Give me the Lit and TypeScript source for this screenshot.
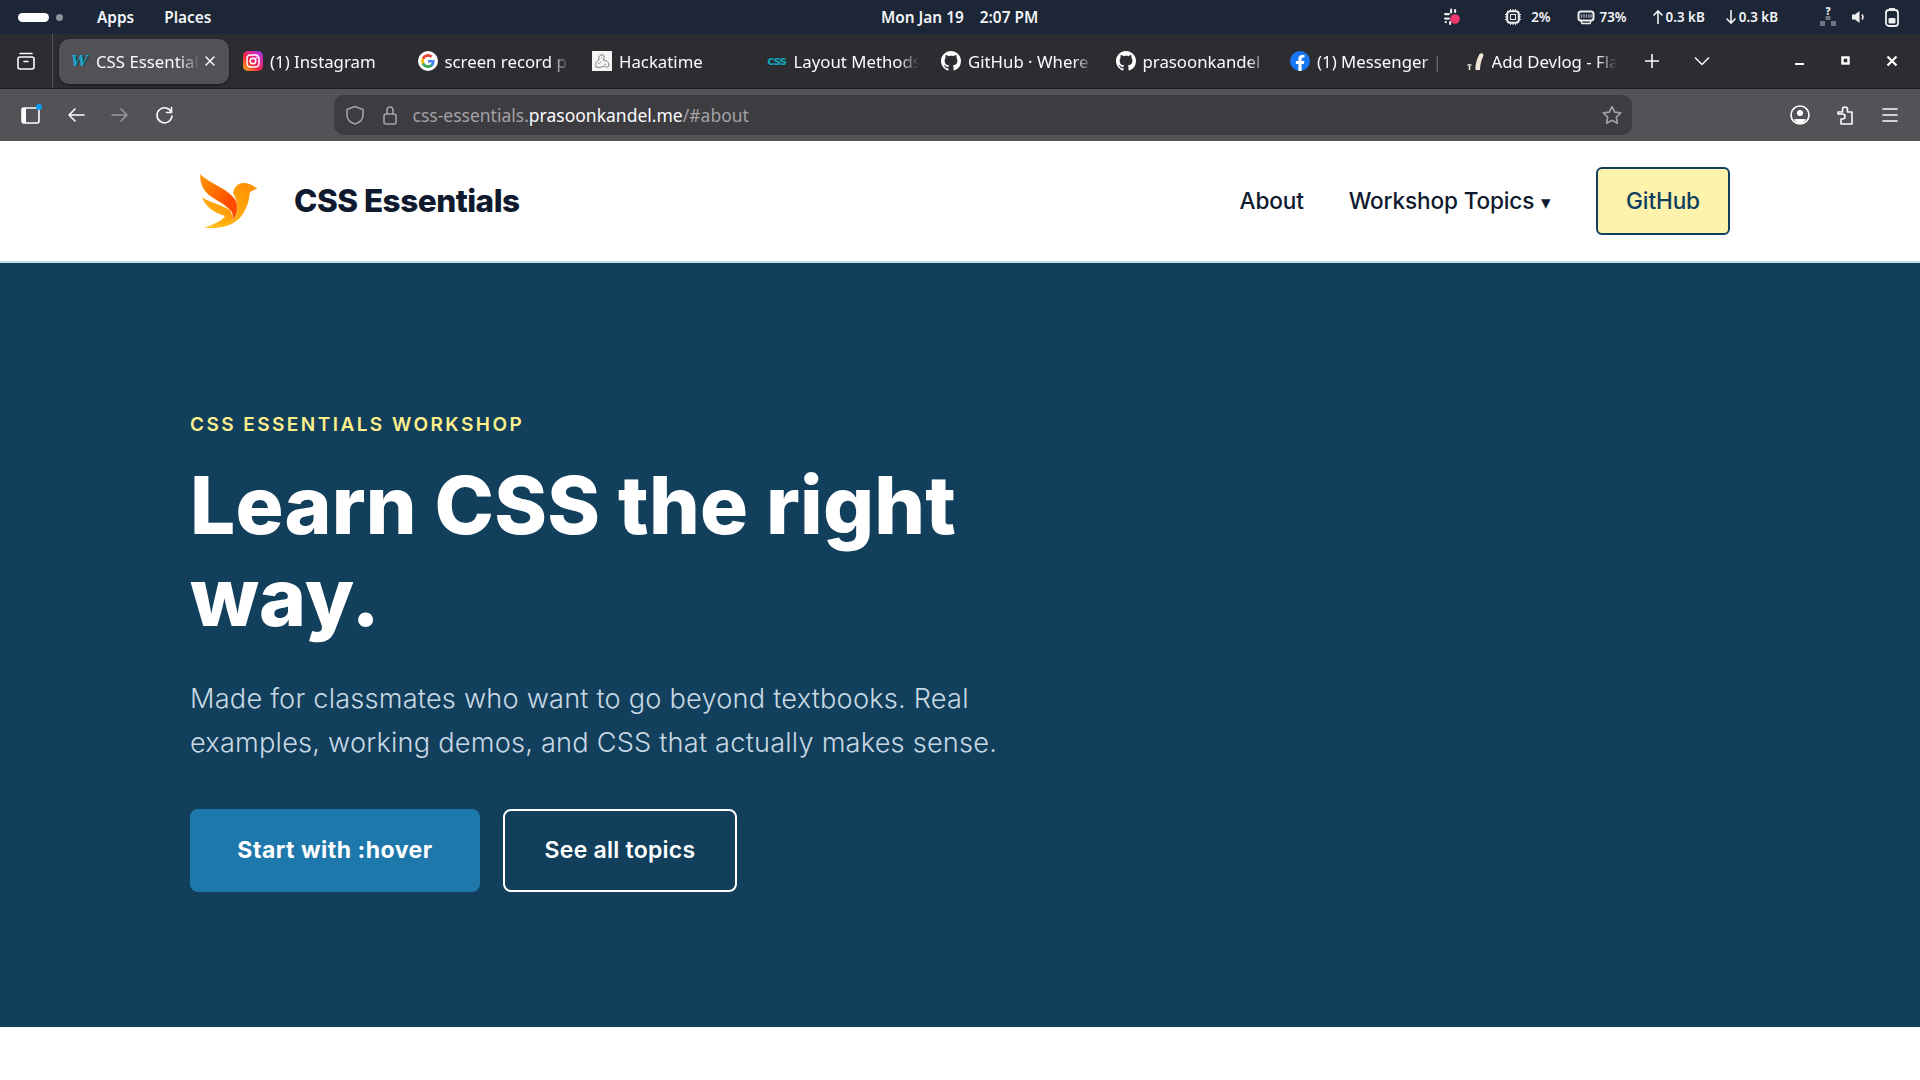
import { LitElement, html, css, svg } from 'lit'
import { customElement } from 'lit/decorators.js'

const stroke = (d: unknown, size = 22) => html`<svg width=${size} height=${size} viewBox="0 0 22 22" fill="none" stroke="currentColor" stroke-width="1.6" stroke-linecap="round" stroke-linejoin="round">${d}</svg>`

const githubMark = html`<svg width="20" height="20" viewBox="0 0 16 16" fill="#fff"><path d="M8 0C3.58 0 0 3.58 0 8c0 3.54 2.29 6.53 5.47 7.59.4.07.55-.17.55-.38 0-.19-.01-.82-.01-1.49-2.01.37-2.53-.49-2.69-.94-.09-.23-.48-.94-.82-1.13-.28-.15-.68-.52-.01-.53.63-.01 1.08.58 1.23.82.72 1.21 1.87.87 2.33.66.07-.52.28-.87.51-1.07-1.78-.2-3.64-.89-3.64-3.95 0-.87.31-1.59.82-2.15-.08-.2-.36-1.02.08-2.12 0 0 .67-.21 2.2.82.64-.18 1.32-.27 2-.27s1.36.09 2 .27c1.53-1.04 2.2-.82 2.2-.82.44 1.1.16 1.92.08 2.12.51.56.82 1.27.82 2.15 0 3.07-1.87 3.75-3.65 3.95.29.25.54.73.54 1.48 0 1.07-.01 1.93-.01 2.2 0 .21.15.46.55.38A8.01 8.01 0 0 0 16 8c0-4.42-3.58-8-8-8z"/></svg>`

const tabs = [
  { title: '(1) Instagram', icon: html`<svg width="20" height="20" viewBox="0 0 20 20"><defs><linearGradient id="ig" x1="0" y1="1" x2="1" y2="0"><stop offset="0" stop-color="#fdc10e"/><stop offset=".4" stop-color="#f0283c"/><stop offset=".75" stop-color="#d42bb0"/><stop offset="1" stop-color="#7a3bea"/></linearGradient></defs><rect width="20" height="20" rx="5" fill="url(#ig)"/><rect x="4" y="4" width="12" height="12" rx="3.4" fill="none" stroke="#fff" stroke-width="1.5"/><circle cx="10" cy="10" r="2.8" fill="none" stroke="#fff" stroke-width="1.5"/><circle cx="13.6" cy="6.4" r=".9" fill="#fff"/></svg>` },
  { title: 'screen record p', icon: html`<svg width="20" height="20" viewBox="0 0 20 20"><circle cx="10" cy="10" r="10" fill="#fff"/><path d="M16.6 10.2c0-.5 0-.9-.1-1.3H10v2.5h3.7a3.2 3.2 0 0 1-1.4 2.1v1.7h2.2c1.3-1.2 2.1-3 2.1-5z" fill="#4285f4"/><path d="M10 17c1.9 0 3.4-.6 4.5-1.7l-2.2-1.7c-.6.4-1.4.7-2.3.7a4 4 0 0 1-3.8-2.8H3.9v1.8A6.8 6.8 0 0 0 10 17z" fill="#34a853"/><path d="M6.2 11.5a4 4 0 0 1 0-2.9V6.8H3.9a6.8 6.8 0 0 0 0 6.500z" fill="#fbbc05"/><path d="M10 5.700c1 0 1.900.4 2.600 1l1.900-1.900A6.800 6.800 0 0 0 3.900 6.800l2.300 1.800A4 4 0 0 1 10 5.700z" fill="#ea4335"/></svg>` },
  { title: 'Hackatime', icon: html`<svg width="20" height="20" viewBox="0 0 20 20"><rect width="20" height="20" fill="#f4f4f4"/><path d="M4 16c-1-4 1-6 3-7-1-3 1-6 4-5 2 1 1 4 0 5 3 0 6 2 6 6-2 2-4 1-5 0-2 1-5 2-8 1z" fill="none" stroke="#777" stroke-width="1"/><path d="M9 7l1-.5M6 13l3-2M12 13l2 1" stroke="#999" stroke-width="1"/></svg>` },
  { title: 'Layout Methods', icon: html`<span class="cssfav">css</span>` },
  { title: 'GitHub · Where', icon: githubMark },
  { title: 'prasoonkandel', icon: githubMark },
  { title: '(1) Messenger |', icon: html`<svg width="20" height="20" viewBox="0 0 20 20"><circle cx="10" cy="10" r="10" fill="#1877f2"/><path d="M13.9 12.900l.44-2.900h-2.780V8.100c0-.8.390-1.560 1.630-1.560h1.260V4.080S13.300 3.880 12.200 3.880c-2.300 0-3.800 1.390-3.800 3.900V10H5.870v2.900H8.400v7a10 10 0 0 0 3.160 0v-7z" fill="#fff"/></svg>` },
  { title: 'Add Devlog - Flavor', icon: html`<svg width="20" height="20" viewBox="0 0 20 20"><path d="M10.500 19c-.5-5 1-10 4-16 2-1.500 4-.5 4 1.500-2 4-3.500 9-3.500 14.500z" fill="#efe6d8"/><path d="M2 14.500c.5-2 4.500-2 5 0z" fill="#efe6d8"/><rect x="3.700" y="14.500" width="1.600" height="4.500" fill="#efe6d8"/></svg>` },
]

@customElement('app-root')
export class AppRoot extends LitElement {
  static styles = css`
    :host { display: block; width: 1920px; height: 1080px; overflow: hidden; background: #fff; font-family: "Noto Sans", sans-serif; }
    svg { display: block; flex: none; }

    .sys { height: 34px; background: #1d2636; color: #f2f4f7; display: flex; align-items: center; font-size: 15.4px; font-weight: 600; padding-left: 18px; position: relative; }
    .pill { width: 31px; height: 9px; border-radius: 5px; background: #fff; }
    .dot { width: 7px; height: 7px; border-radius: 50%; background: #8d939c; margin-left: 7px; }
    .sys .menu { display: flex; gap: 30px; margin-left: 34px; }
    .clock { position: absolute; left: 881px; display: flex; gap: 16px; }
    .tray { margin-left: auto; display: flex; align-items: center; font-size: 13.4px; }
    .tray span { white-space: nowrap; }
    .tray .cpu { margin-left: 42px; }
    .tray .cpu-val { margin-left: 9px; }
    .tray .mem { margin-left: 26px; }
    .tray .mem-val { margin-left: 5px; }
    .tray .up { margin-left: 25px; }
    .tray .rate { margin-left: 2px; }
    .tray .down { margin-left: 20px; }
    .tray .vol { margin-left: 13px; }
    .tray .bat { margin: 0 20px 0 16px; }
    .tray .net { margin-left: 41px; width: 18px; height: 20px; display: flex; flex-direction: column; align-items: center; }
    .tray .net b { font-size: 10px; line-height: 9px; height: 9px; color: #e6e6e6; }

    .tabbar { height: 55px; background: #2d2c31; border-bottom: 1px solid #1c1b1f; box-sizing: border-box; display: flex; align-items: center; color: #fbfbfe; }
    .views { width: 53px; flex: none; height: 100%; box-sizing: border-box; border-right: 1px solid #55545a; display: flex; align-items: center; justify-content: center; }
    .tab { width: 174.5px; flex: none; height: 45px; box-sizing: border-box; padding: 0 12px 0 10px; display: flex; align-items: center; gap: 7px; font-size: 16.8px; white-space: nowrap; overflow: hidden; }
    .tab .label { flex: 1; overflow: hidden; padding-top: 1px; -webkit-mask-image: linear-gradient(90deg, #000 84%, transparent); mask-image: linear-gradient(90deg, #000 84%, transparent); }
    .tab.active { width: 170px; margin: 0 4px 0 6px; background: #525157; border-radius: 10px; box-shadow: 0 1px 3px rgba(0, 0, 0, .45); padding-right: 12px; }
    .tab.active .label { -webkit-mask-image: linear-gradient(90deg, #000 80%, transparent); mask-image: linear-gradient(90deg, #000 80%, transparent); }
    .tab.active svg { margin-left: -4px; }
    .cssfav { width: 20px; font: 700 12px "DejaVu Sans", sans-serif; color: #18a0b4; letter-spacing: -1px; text-align: center; text-shadow: 0 0 1px #0b3a44; }
    .wfav { width: 20px; font: italic 700 15px "DejaVu Serif", serif; color: #1ba1c4; text-align: center; letter-spacing: -1px; text-shadow: 1px 0 0 #10303c; }
    .tabend { margin-left: auto; display: flex; align-items: center; padding-right: 22px; }
    .tabend .more { margin-left: 32px; }
    .tabend .min { margin-left: 83px; }
    .tabend .max, .tabend .close { margin-left: 34px; }

    .toolbar { height: 52px; background: #535257; display: flex; align-items: center; color: #fbfbfe; }
    .tools { display: flex; align-items: center; width: 334px; padding-left: 20px; box-sizing: border-box; gap: 22.5px; }
    .off { opacity: .4; }
    .urlbar { width: 1298px; height: 40px; background: #3d3c40; border-radius: 10px; display: flex; align-items: center; padding: 0 9px 0 10px; box-sizing: border-box; gap: 13px; font-size: 17.5px; color: #a3a2a6; }
    .urlbar b { font-weight: 400; color: #fbfbfe; }
    .urlbar .addr { flex: 1; margin-left: -1.5px; }
    .right { margin-left: auto; display: flex; gap: 23px; padding-right: 19px; }

    nav { height: 120px; box-sizing: border-box; padding: 0 190px; display: flex; align-items: center; background: #fff; }
    .brand { display: flex; align-items: center; gap: 37px; font: 800 31.5px Inter, sans-serif; letter-spacing: -.5px; color: #0f1a2e; }
    .brand span { padding-bottom: 2px; }
    .bird { margin-left: 10px; }
    .links { margin-left: auto; display: flex; align-items: center; gap: 45px; font: 500 22.6px Inter, sans-serif; letter-spacing: -.15px; color: #0f1a2e; }
    .links > span { padding-bottom: 2px; }
    .caret { font-size: 19px; margin-left: 1px; }
    .links > .gh { width: 134px; height: 68px; box-sizing: border-box; background: #fef3ac; border: 2px solid #123f5e; border-radius: 6px; display: flex; align-items: center; justify-content: center; color: #123f5e; }

    .rule { height: 2px; background: #c3dcec; }
    .hero { height: 764px; box-sizing: border-box; background: #113f5c; padding: 150px 190px 0; color: #fff; }
    .eyebrow { font: 600 19px Inter, sans-serif; letter-spacing: 2.45px; color: #fef08a; line-height: 24px; }
    h1 { margin: 22px 0 0; width: 860px; font: 800 80px/92px Inter, sans-serif; letter-spacing: .2px; }
    p { margin: 33.5px 0 0; width: 840px; font: 300 27.2px/44px Inter, sans-serif; letter-spacing: .2px; color: #c8d8e3; }
    .cta { display: flex; gap: 23px; margin-top: 44px; }
    .btn { height: 83px; box-sizing: border-box; border-radius: 8px; display: flex; align-items: center; justify-content: center; font: 700 23px Inter, sans-serif; color: #fff; }
    .primary { width: 290px; background: #1f78ab; letter-spacing: .5px; }
    .ghost { width: 234px; border: 2px solid #fff; font-weight: 600; letter-spacing: .25px; }
  `

  render () {
    return html`
      <div class="sys">
        <div class="pill"></div><div class="dot"></div>
        <div class="menu"><span>Apps</span><span>Places</span></div>
        <div class="clock"><span>Mon Jan 19</span><span>2:07 PM</span></div>
        <div class="tray">
          <svg width="20" height="20" viewBox="0 0 20 20"><g fill="#e6e6e6"><rect x="2" y="6" width="6" height="2.200" rx="1.100"/><rect x="8" y="1.500" width="2.200" height="5" rx="1.100"/><rect x="12" y="2" width="2.200" height="4" rx="1.100"/><rect x="2" y="10.500" width="6" height="2.200" rx="1.100"/><rect x="7" y="14" width="2.200" height="4" rx="1.100"/><rect x="2.500" y="14" width="2.500" height="2.200" rx="1.100"/></g><circle cx="13" cy="12" r="4.800" fill="#f0386b"/></svg>
          <svg class="cpu" width="18" height="18" viewBox="0 0 18 18" fill="none" stroke="#eee"><rect x="3.200" y="3.200" width="11.600" height="11.600" rx="3" stroke-width="2"/><rect x="6.500" y="6.500" width="5" height="5" stroke-width="1"/><path d="M1 6.500h2M1 9h2M1 11.500h2M15 6.500h2M15 9h2M15 11.500h2M6.500 1v2M9 1v2M11.500 1v2M6.500 15v2M9 15v2M11.500 15v2" stroke-width="1"/></svg>
          <span class="cpu-val">2%</span>
          <svg class="mem" width="18" height="18" viewBox="0 0 18 18" fill="none"><rect x="1.500" y="3.500" width="15" height="9" rx="2.500" stroke="#eee" stroke-width="2"/><path d="M4.500 6.200v3.600M7 6.200v3.600M9.500 6.200v3.600M12 6.200v3.600M14 6.200v3.600" stroke="#9a9ea6" stroke-width="1.400"/><path d="M4 13l1 2.500h8l1-2.500" stroke="#eee" stroke-width="1.500"/></svg>
          <span class="mem-val">73%</span>
          <svg class="up" width="12" height="18" viewBox="0 0 12 18" fill="none" stroke="#eee" stroke-width="1.600"><path d="M6 16V3M1.500 7.500 6 3l4.500 4.500"/></svg>
          <span class="rate">0.3 kB</span>
          <svg class="down" width="12" height="18" viewBox="0 0 12 18" fill="none" stroke="#eee" stroke-width="1.600"><path d="M6 2v13M1.500 10.500 6 15l4.500-4.500"/></svg>
          <span class="rate">0.3 kB</span>
          <div class="net">
            <b>?</b>
            <svg width="18" height="11" viewBox="0 0 18 11" fill="#6d7480"><rect x="6.500" y="0" width="5" height="4"/><rect x="1" y="5" width="5" height="5"/><rect x="12" y="5" width="5" height="5"/></svg>
          </div>
          <svg class="vol" width="18" height="18" viewBox="0 0 18 18"><path d="M2 6.500h3L9.500 3v12L5 11.500H2z" fill="#eee"/><path d="M12 6.500a4 4 0 0 1 0 5" fill="none" stroke="#eee" stroke-width="1.500"/></svg>
          <svg class="bat" width="16" height="20" viewBox="0 0 16 20"><rect x="2" y="3" width="12" height="16" rx="3" fill="none" stroke="#eee" stroke-width="1.800"/><rect x="5" y="1" width="6" height="2" fill="#eee"/><rect x="4.500" y="11" width="7" height="5.500" rx="1" fill="#eee"/></svg>
        </div>
      </div>

      <div class="tabbar">
        <div class="views">${stroke(svg`<rect x="3" y="7" width="16" height="12" rx="2"/><path d="M5 3.500h12M9 11.500h4"/>`)}</div>
        <div class="tab active">
          <span class="wfav">W</span>
          <span class="label">CSS Essentials</span>
          <svg width="14" height="14" viewBox="0 0 14 14" stroke="#fbfbfe" stroke-width="1.500" stroke-linecap="round"><path d="M3 3l8 8M11 3l-8 8"/></svg>
        </div>
        ${tabs.map(t => html`<div class="tab">${t.icon}<span class="label">${t.title}</span></div>`)}
        <div class="tabend">
          <svg width="18" height="18" viewBox="0 0 18 18" stroke="#fbfbfe" stroke-width="1.600"><path d="M9 2v14M2 9h14"/></svg>
          <svg class="more" width="18" height="18" viewBox="0 0 18 18" fill="none" stroke="#fbfbfe" stroke-width="1.500"><path d="M2 5.500l7 7 7-7"/></svg>
          <svg class="min" width="12" height="12" viewBox="0 0 12 12"><rect x="1" y="8" width="9" height="2" fill="#fff"/></svg>
          <svg class="max" width="12" height="12" viewBox="0 0 12 12" fill="none" stroke="#fff" stroke-width="2.400"><rect x="2.500" y="2.500" width="6" height="6"/></svg>
          <svg class="close" width="12" height="12" viewBox="0 0 12 12" stroke="#fff" stroke-width="2.200"><path d="M1.500 1.500l9 9M10.500 1.500l-9 9"/></svg>
        </div>
      </div>

      <div class="toolbar">
        <div class="tools">
          <svg width="22" height="22" viewBox="0 0 22 22" fill="none" stroke="#fff"><rect x="2" y="4" width="17" height="15" rx="2" stroke-width="1.600"/><rect x="2" y="4" width="4" height="15" fill="#fff" stroke="none"/><circle cx="19" cy="3" r="3" fill="#0a9ff5" stroke="none"/></svg>
          ${stroke(svg`<path d="M19 11H4M10 5l-6 6 6 6"/>`)}
          <span class="off">${stroke(svg`<path d="M3 11h15M12 5l6 6-6 6"/>`)}</span>
          ${stroke(svg`<path d="M17.500 3.500V8.500h-5M17.500 8.500a7.500 7.500 0 1 0 .5 3.500"/>`)}
        </div>
        <div class="urlbar">
          ${stroke(svg`<path d="M11 2.500l8 3v6c0 4-3.500 7-8 8.500-4.500-1.500-8-4.500-8-8.500v-6z"/>`)}
          ${stroke(svg`<rect x="5" y="10" width="12" height="10" rx="2"/><path d="M8 10V6a3 3 0 0 1 6 0v4"/>`)}
          <span class="addr">css-essentials.<b>prasoonkandel.me</b>/#about</span>
          ${stroke(svg`<path d="M11 2.500l2.700 5.600 6 .8-4.400 4.200 1.100 6.100-5.400-3-5.400 3 1.100-6.100-4.400-4.200 6-.8z"/>`)}
        </div>
        <div class="right">
          <svg width="22" height="22" viewBox="0 0 22 22" fill="none" stroke="#fff" stroke-width="1.600"><circle cx="11" cy="11" r="9"/><circle cx="11" cy="9" r="3" fill="#fff" stroke="none"/><path d="M5.500 15h11v1.500l-3 2.500h-5l-3-2.500z" fill="#fff" stroke="none"/></svg>
          ${stroke(svg`<path d="M4 8h4.500V5.500a2.500 2.500 0 0 1 5 0V8H18v12H7v-5h1.500a2.500 2.500 0 0 0 0-5H4z"/>`)}
          ${stroke(svg`<path d="M4 5h14M4 11h14M4 17h14"/>`)}
        </div>
      </div>

      <nav>
        <div class="brand">
          <svg class="bird" width="57" height="54" viewBox="0 0 57 54">
            <defs>
              <linearGradient id="w1" x1="0" y1="0" x2="1" y2="1"><stop offset="0" stop-color="#ff9a00"/><stop offset=".7" stop-color="#ff4a00"/></linearGradient>
              <linearGradient id="w2" x1="0" y1="1" x2="1" y2="0"><stop offset="0" stop-color="#ffc61a"/><stop offset="1" stop-color="#ff8a00"/></linearGradient>
            </defs>
            <path d="M4 54C20 55 37 52 44 38 49 29 49 24 50 18L57.300 14.500C53 12 50 9 44 9 37 9 34 14 33 19 38 27 38 36 33 44 26 51 14 52 4 54Z" fill="url(#w2)"/>
            <path d="M2 23C8 28 18 29 30 36L34 46C26 51 14 52 4 54 14 50 22 47 25 42 15 39 5 33 2 23Z" fill="url(#w2)"/>
            <path d="M0 0C0 6 1 10 3 14 8 24 22 27 31 37 33 40 33 44 32 47 37 42 39 33 36 27 30 15 10 10 0 0Z" fill="url(#w1)" stroke="#ffe2b8" stroke-width=".4"/>
          </svg>
          <span>CSS Essentials</span>
        </div>
        <div class="links">
          <span>About</span>
          <span>Workshop Topics <span class="caret">▾</span></span>
          <span class="gh">GitHub</span>
        </div>
      </nav>
      <div class="rule"></div>

      <section class="hero">
        <div class="eyebrow">CSS ESSENTIALS WORKSHOP</div>
        <h1>Learn CSS the right way.</h1>
        <p>Made for classmates who want to go beyond textbooks. Real examples, working demos, and CSS that actually makes sense.</p>
        <div class="cta">
          <span class="btn primary">Start with :hover</span>
          <span class="btn ghost">See all topics</span>
        </div>
      </section>
    `
  }
}
